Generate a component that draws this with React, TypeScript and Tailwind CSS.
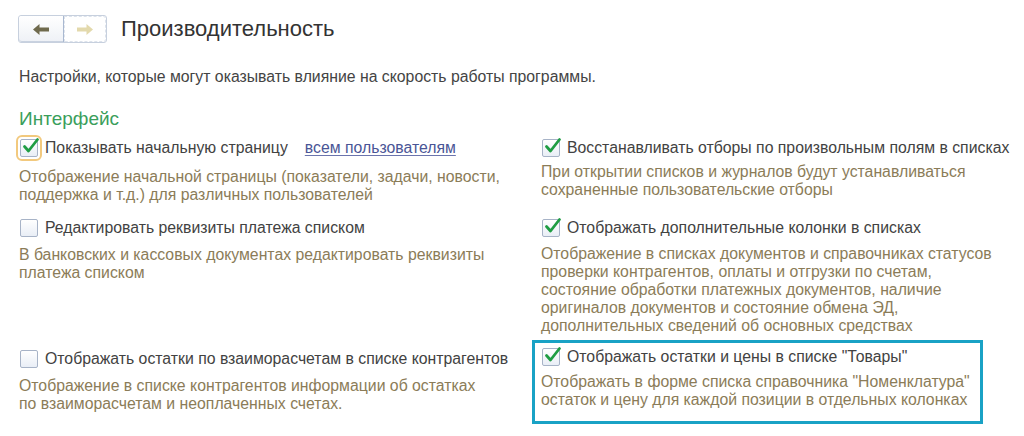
import React from "react";

function Check({ checked, focused }: { checked?: boolean; focused?: boolean }) {
  return (
    <span
      className={
        "relative inline-block h-[18px] w-[18px] shrink-0 rounded-[2px] border border-[#a7b3c7] bg-gradient-to-b from-white to-[#e9eef6]" +
        (focused ? " outline-2 outline-offset-[2px] outline-[#f2c97e]" : "")
      }
    >
      {checked && (
        <svg
          className="absolute left-[1px] top-[-3px]"
          width="18"
          height="18"
          viewBox="0 0 18 18"
          fill="none"
        >
          <path
            d="M2.5 9.5 L6.5 14 L15.5 2.5"
            stroke="#1f9d43"
            strokeWidth="2.8"
            strokeLinecap="round"
            strokeLinejoin="round"
          />
        </svg>
      )}
    </span>
  );
}

function Option({
  label,
  checked,
  focused,
  gap,
  children,
  extra,
}: {
  label: string;
  checked?: boolean;
  focused?: boolean;
  gap: string;
  children: React.ReactNode;
  extra?: React.ReactNode;
}) {
  return (
    <div>
      <div className="flex h-[22px] items-center pl-[1px]">
        <Check checked={checked} focused={focused} />
        <span className="ml-[7px] whitespace-nowrap text-[15.8px] text-[#424242]">{label}</span>
        {extra}
      </div>
      <p className={"whitespace-nowrap text-[15.8px] leading-[18px] text-[#8b7c58] " + gap}>{children}</p>
    </div>
  );
}

export default function App() {
  return (
    <div className="h-[436px] w-[1024px] overflow-hidden bg-white font-['Liberation_Sans',Arial,sans-serif]">
      <header className="flex items-center pl-[18px] pt-[15px]">
        <div className="flex h-[28px] rounded-[3px] border border-[#c7d0de]">
          <button className="flex w-[45px] items-center justify-center rounded-l-[3px] border-r border-[#a9b8d0] bg-gradient-to-b from-white to-[#eef1f6] shadow-[inset_0_-1px_0_#c9d2e0]">
            <svg width="16" height="11" viewBox="0 0 16 11">
              <path d="M0 5.5 L6.5 0 L6.5 3.5 L16 3.5 L16 7.5 L6.5 7.5 L6.5 11 Z" fill="#6f6a4d" />
            </svg>
          </button>
          <button className="flex w-[42px] items-center justify-center rounded-r-[3px] border border-dashed border-[#dde3ec] bg-white">
            <svg width="16" height="11" viewBox="0 0 16 11">
              <path d="M16 5.5 L9.5 0 L9.5 3.5 L0 3.5 L0 7.5 L9.5 7.5 L9.5 11 Z" fill="#e3d9ac" />
            </svg>
          </button>
        </div>
        <h1 className="ml-[14px] text-[22px] leading-[28px] text-[#333333]">Производительность</h1>
      </header>

      <p className="mt-[25px] pl-[19px] text-[15.8px] leading-[18px] text-[#444444]">
        Настройки, которые могут оказывать влияние на скорость работы программы.
      </p>

      <h2 className="mt-[22px] pl-[19px] text-[19px] leading-[22px] text-[#3a9e5b]">Интерфейс</h2>

      <div className="mt-[7px] grid grid-cols-[513px_451px] pl-[19px]">
        <Option
          label="Показывать начальную страницу"
          checked
          focused
          gap="mt-[9px]"
          extra={
            <span className="ml-[17px] whitespace-nowrap text-[15.8px] text-[#4a5596] underline decoration-[#6b74ad] underline-offset-2">
              всем пользователям
            </span>
          }
        >
          Отображение начальной страницы (показатели, задачи, новости,
          <br />
          поддержка и т.д.) для различных пользователей
        </Option>
        <div className="pl-[9px]">
          <Option label="Восстанавливать отборы по произвольным полям в списках" checked gap="mt-[4px]">
            При открытии списков и журналов будут устанавливаться
            <br />
            сохраненные пользовательские отборы
          </Option>
        </div>

        <div className="pt-[13px]">
          <Option label="Редактировать реквизиты платежа списком" gap="mt-[7px]">
            В банковских и кассовых документах редактировать реквизиты
            <br />
            платежа списком
          </Option>
        </div>
        <div className="pl-[9px] pt-[13px]">
          <Option label="Отображать дополнительные колонки в списках" checked gap="mt-[6px]">
            Отображение в списках документов и справочниках статусов
            <br />
            проверки контрагентов, оплаты и отгрузки по счетам,
            <br />
            состояние обработки платежных документов, наличие
            <br />
            оригиналов документов и состояние обмена ЭД,
            <br />
            дополнительных сведений об основных средствах
          </Option>
        </div>

        <div className="pt-[13px]">
          <Option label="Отображать остатки по взаиморасчетам в списке контрагентов" gap="mt-[7px]">
            Отображение в списке контрагентов информации об остатках
            <br />
            по взаиморасчетам и неоплаченных счетах.
          </Option>
        </div>
        <div className="pt-[5px]">
          <div className="border-[3px] border-[#19a2c5] pb-[12px] pl-[6px] pt-[3px]">
            <Option label={'Отображать остатки и цены в списке "Товары"'} checked gap="mt-[5px]">
              Отображать в форме списка справочника "Номенклатура"
              <br />
              остаток и цену для каждой позиции в отдельных колонках
            </Option>
          </div>
        </div>
      </div>
    </div>
  );
}
